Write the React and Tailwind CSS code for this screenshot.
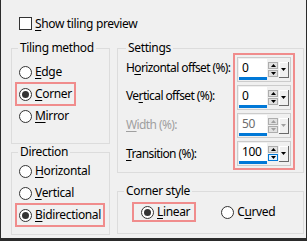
import React from "react";

function Acc({ pre = "", u, post = "" }) {
  return (
    <span className="whitespace-nowrap">
      {pre}
      <span className="underline underline-offset-[2px]">{u}</span>
      {post}
    </span>
  );
}

function Radio({ checked }) {
  return (
    <span className="flex h-[13px] w-[13px] shrink-0 items-center justify-center rounded-full border border-[#333333] bg-white">
      {checked && <span className="h-[7px] w-[7px] rounded-full bg-[#333333]" />}
    </span>
  );
}

function RadioRow({ checked, mark, children }) {
  return (
    <div className="flex h-[22px] items-center">
      <span
        className={`inline-flex h-[20px] items-center gap-[3px] pl-[2px] pr-[2px] ${
          mark ? "outline-2 outline-[#f08c8c]" : ""
        }`}
      >
        <Radio checked={checked} />
        {children}
      </span>
    </div>
  );
}

function Tri({ up, color = "#000" }) {
  return (
    <svg width="5" height="3" viewBox="0 0 5 3">
      <path d={up ? "M0 3h5L2.5 0z" : "M0 0h5L2.5 3z"} fill={color} />
    </svg>
  );
}

function SpinBtn({ up, disabled, hot }) {
  return (
    <div
      className={`flex h-[7px] w-[10px] items-center justify-center border ${
        hot ? "border-[#0078d7] bg-[#e5f1fb]" : "border-[#adadad] bg-[#e1e1e1]"
      }`}
    >
      <Tri up={up} color={disabled ? "#a0a0a0" : "#000"} />
    </div>
  );
}

function Spin({ value, disabled, hot }) {
  return (
    <div className="flex h-[25px] w-[54px] items-center border border-[#cccccc] pl-[1px]">
      <div
        className={`flex h-[21px] w-[28px] items-center border-b-[3px] border-[#0078d7] bg-white pl-[3px] ${
          disabled ? "text-[#6d6d6d]" : "text-black"
        }`}
      >
        {value}
      </div>
      <div className="ml-[1px] flex flex-col gap-[1px]">
        <SpinBtn up disabled={disabled} />
        <SpinBtn disabled={disabled} hot={hot} />
      </div>
      <div className="ml-[1px] flex h-[16px] w-[10px] items-center justify-center border-r border-b border-[#696969] bg-[#f0f0f0] shadow-[inset_1px_1px_0_#ffffff]">
        <Tri color={disabled ? "#a0a0a0" : "#000"} />
      </div>
    </div>
  );
}

export default function App() {
  return (
    <div className="h-[241px] w-[307px] border-b-[3px] border-l border-r border-[#2b2b2b] bg-[#f0f0f0] pl-[10px] pt-[17px] font-['Segoe_UI','Noto_Sans',sans-serif] text-[12px] leading-[16px] tracking-[-0.35px] text-black">
      {/* preview checkbox */}
      <div className="flex h-[13px] items-center gap-[3px] pl-[8px]">
        <span className="h-[13px] w-[13px] border border-[#333333] bg-white" />
        <Acc u="S" post="how tiling preview" />
      </div>

      <div className="mt-[10px] flex gap-[7px]">
        {/* left column */}
        <div className="flex w-[99px] flex-col">
          <fieldset className="h-[104px] border border-[#dcdcdc] px-[5px] pt-[5px]">
            <legend className="ml-[1px] px-[2px]">Tiling method</legend>
            <RadioRow>
              <Acc u="E" post="dge" />
            </RadioRow>
            <RadioRow checked mark>
              <Acc u="C" post="orner" />
            </RadioRow>
            <RadioRow>
              <Acc u="M" post="irror" />
            </RadioRow>
          </fieldset>
          <fieldset className="h-[91px] border border-[#dcdcdc] px-[5px]">
            <legend className="ml-[1px] px-[2px]">Direction</legend>
            <RadioRow>
              <Acc u="H" post="orizontal" />
            </RadioRow>
            <RadioRow>
              <Acc u="V" post="ertical" />
            </RadioRow>
            <RadioRow checked mark>
              <Acc u="B" post="idirectional" />
            </RadioRow>
          </fieldset>
        </div>

        {/* right column */}
        <div className="flex w-[187px] flex-col">
          <fieldset className="h-[133px] border border-[#dcdcdc] pl-[8px] pr-[8px]">
            <legend className="px-[2px]">Settings</legend>
            <div className="-mt-[3px] flex justify-between">
              <div className="flex w-[100px] flex-col gap-[3px] pt-[2px] tracking-[-0.6px]">
                <div className="flex h-[27px] items-center pb-[2px]">
                  <Acc pre="H" u="o" post="rizontal offset (%):" />
                </div>
                <div className="flex h-[25px] items-center pb-[3px]">
                  <Acc pre="Ve" u="r" post="tical offset (%):" />
                </div>
                <div className="flex h-[25px] items-center pb-[2px] text-[#a0a0a0]">
                  <Acc u="W" post="idth (%):" />
                </div>
                <div className="flex h-[25px] items-center">
                  <Acc u="T" post="ransition (%):" />
                </div>
              </div>
              <div className="flex shrink-0 flex-col gap-[3px] border-2 border-[#f08c8c] p-[2px]">
                <Spin value="0" />
                <Spin value="0" />
                <Spin value="50" disabled />
                <Spin value="100" hot />
              </div>
            </div>
          </fieldset>
          <fieldset className="mt-[10px] h-[51px] border border-[#dcdcdc] pl-[16px] pt-[5px]">
            <legend className="-ml-[10px] px-[2px]">Corner style</legend>
            <div className="flex h-[16px] items-center">
              <span className="inline-flex h-[16px] items-center gap-[3px] pl-[7px] pr-[4px] outline-2 outline-[#f08c8c]">
                <Radio checked />
                <Acc u="L" post="inear" />
              </span>
              <span className="ml-[27px] inline-flex items-center gap-[3px]">
                <Radio />
                <Acc pre="C" u="u" post="rved" />
              </span>
            </div>
          </fieldset>
        </div>
      </div>
    </div>
  );
}
